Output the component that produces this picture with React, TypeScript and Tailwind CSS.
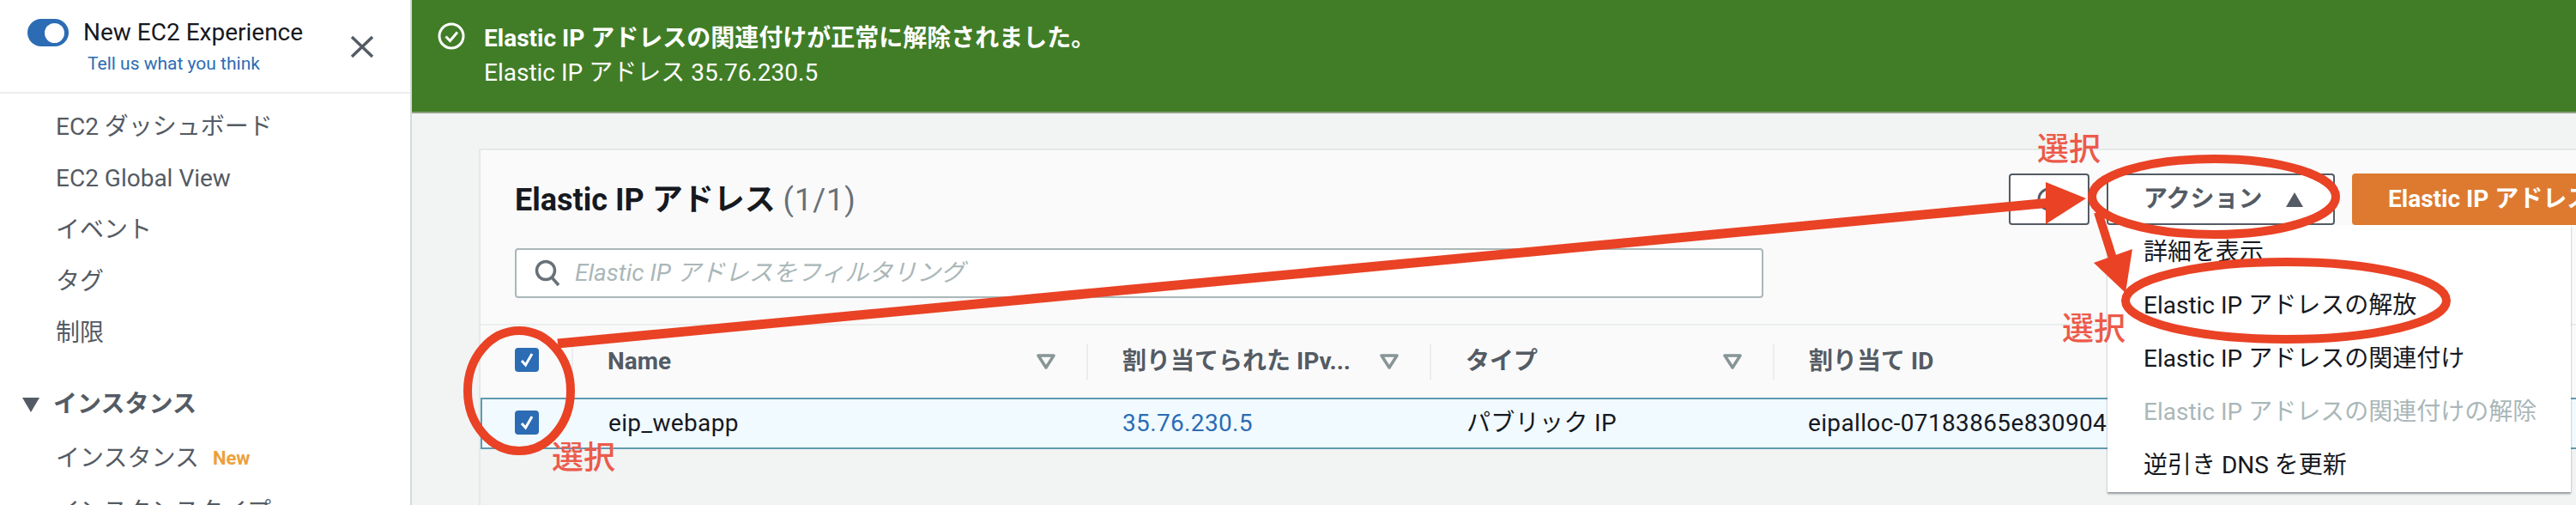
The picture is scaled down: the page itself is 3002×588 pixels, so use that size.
import React from 'react';

const navItems = ['EC2 ダッシュボード', 'EC2 Global View', 'イベント', 'タグ', '制限'];
const menuItems = [
  { label: '詳細を表示' },
  { label: 'Elastic IP アドレスの解放' },
  { label: 'Elastic IP アドレスの関連付け' },
  { label: 'Elastic IP アドレスの関連付けの解除', disabled: true },
  { label: '逆引き DNS を更新' },
];

const CheckBox = () => (
  <span className="flex h-[28px] w-[28px] items-center justify-center rounded-[4px] bg-[#2b6cb4]">
    <svg width="18" height="20" viewBox="0 0 18 20" fill="none">
      <path d="M3 11l4.5 5L15 3" stroke="#fff" strokeWidth="3" />
    </svg>
  </span>
);

const FilterIcon = () => (
  <svg width="22" height="18" viewBox="0 0 22 18" fill="none">
    <path d="M2 2h18L11 16z" stroke="#879596" strokeWidth="3.5" strokeLinejoin="round" />
  </svg>
);

const HeaderCell = ({ label, width, filter = true }: { label: string; width: string; filter?: boolean }) => (
  <div className={`flex h-[42px] ${width} shrink-0 items-center justify-between border-r-2 border-[#eaeded] pl-[40px] pr-[36px] last:border-r-0`}>
    <span className="whitespace-nowrap font-bold text-[#545b64]">{label}</span>
    {filter && <FilterIcon />}
  </div>
);

const Annotation = ({ className }: { className: string }) => (
  <span className={`absolute z-30 text-[37px] font-medium leading-[37px] text-[#ec5a4a] ${className}`}>選択</span>
);

export default function App() {
  return (
    <div className="relative flex h-[588px] w-[3002px] overflow-hidden bg-[#f2f3f3] font-['Roboto','Noto_Sans_CJK_JP',sans-serif] text-[28px] leading-[36px] text-[#16191f]">
      <aside className="h-full w-[480px] shrink-0 border-r-2 border-[#d5dbdb] bg-white">
        <div className="relative h-[109px] border-b-2 border-[#eaeded]">
          <div className="flex items-center gap-[17px] pl-[32px] pt-[20px]">
            <span className="flex h-[32px] w-[48px] items-center justify-end rounded-full bg-[#2b6cb4] pr-[5px]">
              <span className="h-[23px] w-[23px] rounded-full bg-white" />
            </span>
            <span className="text-[28px]">New EC2 Experience</span>
          </div>
          <div className="pl-[102px] pt-[3px] text-[21px] leading-[30px] text-[#2b6cb4]">Tell us what you think</div>
          <svg className="absolute left-[408px] top-[41px]" width="28" height="27" viewBox="0 0 28 27" fill="none">
            <path d="M2 2l24 23M26 2L2 25" stroke="#545b64" strokeWidth="3.5" />
          </svg>
        </div>
        <nav className="pt-[9px] text-[#545b64]">
          {navItems.map((item) => (
            <div key={item} className="flex h-[60px] items-center pl-[65px]">{item}</div>
          ))}
          <div className="mt-[23px] flex h-[60px] items-center pl-[26px] font-bold">
            <svg className="mr-[16px]" width="20" height="17" viewBox="0 0 20 17">
              <path d="M0 0h20L10 17z" fill="#545b64" />
            </svg>
            インスタンス
          </div>
          <div className="flex h-[66px] items-center pl-[65px]">
            インスタンス
            <span className="ml-[16px] text-[22px] font-bold text-[#eba13c]">New</span>
          </div>
          <div className="flex h-[58px] items-center pl-[65px]">インスタンスタイプ</div>
        </nav>
      </aside>

      <main className="min-w-0 flex-1">
        <div className="flex h-[132px] items-start gap-[22px] border-b-2 border-[#8fa084] bg-[#417d27] pl-[30px] pt-[25px] text-white">
          <svg width="32" height="32" viewBox="0 0 32 32" fill="none" className="mt-[1px] shrink-0">
            <circle cx="16" cy="16" r="14" stroke="#fff" strokeWidth="3" />
            <path d="M9.5 16.5l5 5 8.5-10" stroke="#fff" strokeWidth="3" />
          </svg>
          <div className="leading-[40px]">
            <div className="font-bold">Elastic IP アドレスの関連付けが正常に解除されました。</div>
            <div>Elastic IP アドレス 35.76.230.5</div>
          </div>
        </div>

        <div className="ml-[78px] mt-[41px] h-[415px] border-l-2 border-t-2 border-[#e4e8e8]">
          <section className="h-[202px] bg-[#fafafa] pl-[40px]">
            <div className="flex h-[114px] items-start justify-between">
              <h2 className="pt-[37px] text-[36px] font-bold leading-[42px]">
                Elastic IP アドレス <span className="font-normal tracking-[1px] text-[#687078]">(1/1)</span>
              </h2>
              <div className="flex shrink-0 gap-[20px] pt-[27px]">
                <button className="flex h-[60px] w-[94px] items-center justify-center rounded-[4px] border-2 border-[#545b64] bg-white">
                  <svg width="32" height="32" viewBox="0 0 32 32" fill="none">
                    <path d="M16 4a12 12 0 1 0 12 12M16 0v10" stroke="#545b64" strokeWidth="3" />
                  </svg>
                </button>
                <button className="flex h-[60px] w-[266px] items-center gap-[27px] rounded-[4px] border-2 border-[#545b64] bg-white pl-[41px] font-bold text-[#545b64]">
                  アクション
                  <svg width="20" height="17" viewBox="0 0 20 17">
                    <path d="M0 17h20L10 0z" fill="#545b64" />
                  </svg>
                </button>
                <div className="flex h-[60px] w-[261px] items-center overflow-hidden whitespace-nowrap rounded-l-[4px] bg-[#dd7a2f] pl-[42px] font-bold text-white">
                  Elastic IP アドレスの割り当て
                </div>
              </div>
            </div>
            <div className="flex h-[58px] w-[1455px] items-center rounded-[4px] border-2 border-[#aab7b8] bg-white pl-[20px]">
              <svg width="32" height="32" viewBox="0 0 32 32" fill="none">
                <circle cx="14" cy="13" r="10.5" stroke="#687078" strokeWidth="3.5" />
                <path d="M21 21l8 9" stroke="#687078" strokeWidth="3.5" />
              </svg>
              <span className="ml-[16px] italic text-[#aab7b8]">Elastic IP アドレスをフィルタリング</span>
            </div>
          </section>

          <div className="flex h-[86px] items-center border-t-2 border-[#eaeded] bg-[#fafafa]">
            <div className="flex h-[42px] w-[108px] shrink-0 items-center border-r-2 border-[#eaeded] pb-[4px] pl-[40px]">
              <CheckBox />
            </div>
            <HeaderCell label="Name" width="w-[600px]" />
            <HeaderCell label="割り当てられた IPv..." width="w-[400px]" />
            <HeaderCell label="タイプ" width="w-[400px]" />
            <HeaderCell label="割り当て ID" width="w-[400px]" filter={false} />
          </div>

          <div className="flex h-[60px] items-center whitespace-nowrap border-2 border-r-0 border-[#5f9bb0] bg-[#f1faff] tracking-[0.35px]">
            <div className="w-[147px] shrink-0 pb-[2px] pl-[38px]"><CheckBox /></div>
            <div className="w-[599px] shrink-0">eip_webapp</div>
            <div className="w-[401px] shrink-0 text-[#2b6cb4]">35.76.230.5</div>
            <div className="w-[398px] shrink-0">パブリック IP</div>
            <div>eipalloc-07183865e830904a1</div>
          </div>
        </div>
      </main>

      {/* action menu */}
      <div className="absolute left-[2456px] top-[262px] z-10 h-[311px] w-[540px] bg-white pl-[42px] pt-[1px] shadow-[0_2px_2px_rgba(84,91,100,0.6)]">
        {menuItems.map((item) => (
          <div key={item.label} className={`flex h-[62px] items-center whitespace-nowrap ${item.disabled ? 'text-[#aab7b8]' : ''}`}>
            {item.label}
          </div>
        ))}
      </div>

      {/* red markup on top of the screenshot */}
      <svg className="absolute left-0 top-0 z-20" width="3002" height="588" viewBox="0 0 3002 588" fill="none">
        <ellipse cx="605" cy="455" rx="60" ry="70" stroke="#e94225" strokeWidth="10" />
        <ellipse cx="2580" cy="229" rx="142" ry="44" stroke="#e94225" strokeWidth="10" />
        <ellipse cx="2664" cy="350" rx="187" ry="45" stroke="#e94225" strokeWidth="10" />
        <path d="M650 400L2390 236" stroke="#e94225" strokeWidth="11" />
        <path d="M2384 212L2431 231L2384 261z" fill="#e94225" />
        <path d="M2445 247L2465 310" stroke="#e94225" strokeWidth="10" />
        <path d="M2440 306L2485 290L2477 341z" fill="#e94225" />
      </svg>
      <Annotation className="left-[2374px] top-[156px]" />
      <Annotation className="left-[2403px] top-[365px]" />
      <Annotation className="left-[643px] top-[515px]" />
    </div>
  );
}
